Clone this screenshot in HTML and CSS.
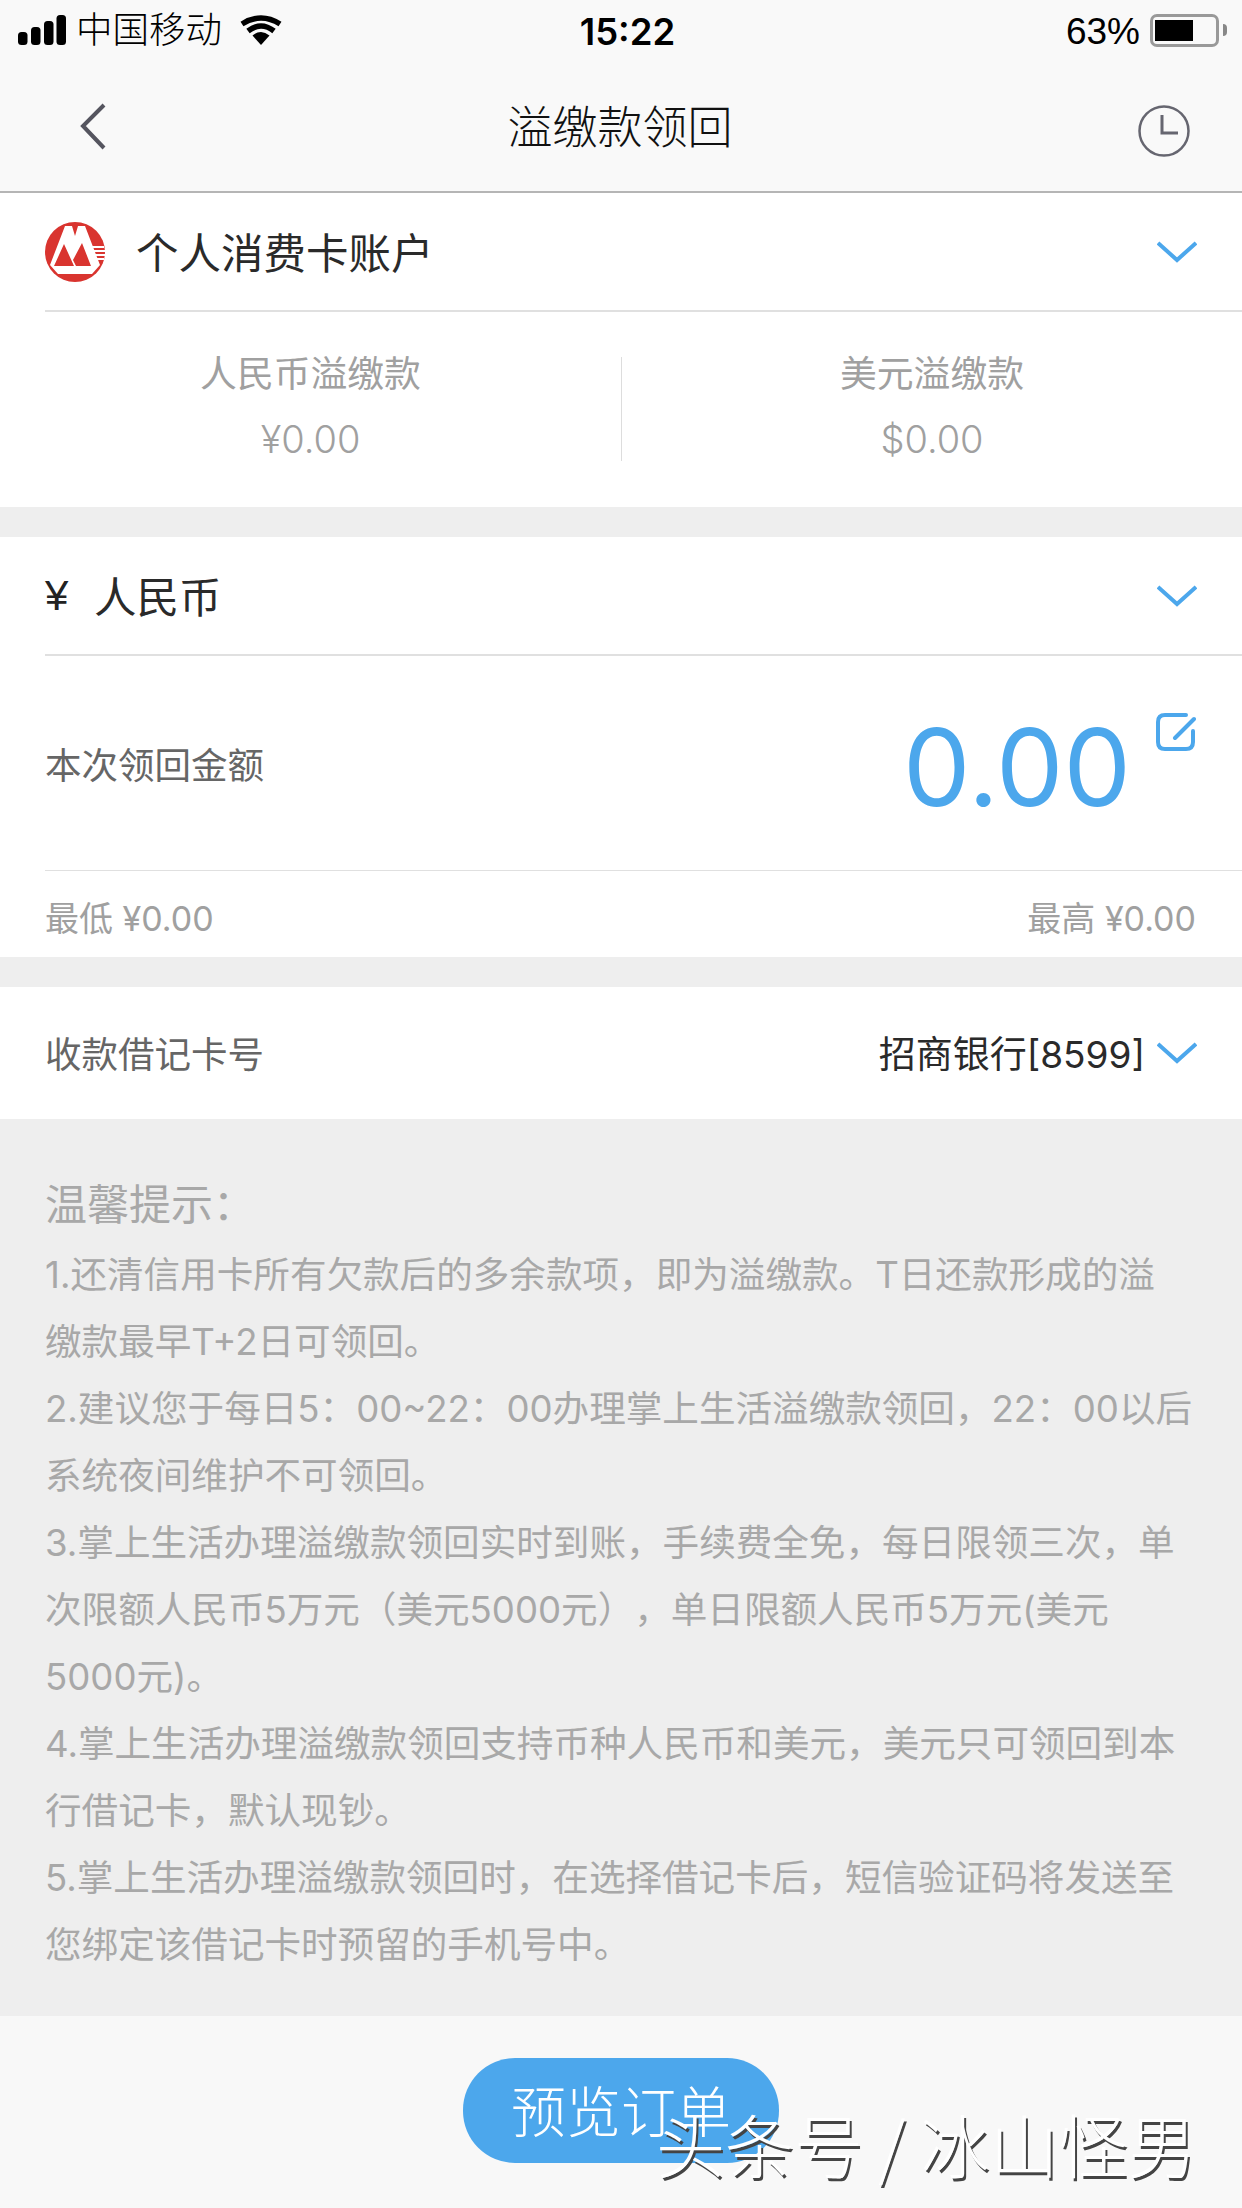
FILE: index.html
```html
<!DOCTYPE html>
<html lang="zh">
<head>
<meta charset="utf-8">
<title>溢缴款领回</title>
<link rel="stylesheet" href="styles.css">
</head>
<body>
<div class="phone">
  <header class="top">
    <div class="status">
      <div class="status-left">
        <svg class="signal" width="48" height="30" viewBox="0 0 48 30"><rect x="0" y="17" width="9.500" height="13" rx="3.500"/><rect x="13" y="12" width="9.500" height="18" rx="3.500"/><rect x="26" y="6" width="9.500" height="24" rx="3.500"/><rect x="38.500" y="0" width="9.500" height="30" rx="3.500"/></svg>
        <span class="carrier">中国移动</span>
        <svg class="wifi" width="42" height="30" viewBox="0 0 42 30"><path d="M21 30 L12.500 20.500 Q21 13.500 29.500 20.500Z"/><path d="M8 16 Q21 6 34 16" fill="none" stroke="#000" stroke-width="5.500"/><path d="M2 9 Q21 -3 40 9" fill="none" stroke="#000" stroke-width="5.500"/></svg>
      </div>
      <div class="clock">15:22</div>
      <div class="status-right">
        <span class="pct">63%</span>
        <div class="battery"><div class="battery-fill"></div></div>
        <div class="battery-tip"></div>
      </div>
    </div>
    <nav class="nav">
      <svg class="back" width="28" height="48" viewBox="0 0 28 48"><path d="M25 3 L4 24 L25 46" fill="none" stroke="#55555f" stroke-width="4"/></svg>
      <h1 class="title">溢缴款领回</h1>
      <svg class="history" width="54" height="54" viewBox="0 0 54 54"><circle cx="27" cy="27" r="24.500" fill="none" stroke="#666670" stroke-width="2.500"/><path d="M25 11 V29 H41" fill="none" stroke="#666670" stroke-width="3"/></svg>
    </nav>
  </header>

  <section class="panel panel-first">
    <div class="row row-head">
      <div class="head-left">
        <svg class="logo" width="60" height="60" viewBox="0 0 60 60">
          <circle cx="30" cy="30" r="30" fill="#d9342f"/>
          <path d="M20 4 H27 L30 14 L33 4 H40 L55 43 L47 52 H13 L5 43Z" fill="#fff"/>
          <path d="M9 44 L19 22 L29 44Z M31 44 L28 38 L37 21 L46 44Z" fill="#d9342f"/>
          <path d="M47 25 H59 M47 29 H60 M47 33 H60 M47 37 H59" stroke="#fff" stroke-width="2"/>
        </svg>
        <span class="head-text">个人消费卡账户</span>
      </div>
      <svg class="chev" width="40" height="24" viewBox="0 0 40 24"><path d="M1 3 L20 20 L39 3" fill="none" stroke="#4ca7ec" stroke-width="4"/></svg>
    </div>
    <div class="stats">
      <div class="stat stat-left"><div class="stat-label">人民币溢缴款</div><div class="stat-value">¥0.00</div></div>
      <div class="stat-sep"></div>
      <div class="stat stat-right"><div class="stat-label">美元溢缴款</div><div class="stat-value">$0.00</div></div>
    </div>
  </section>

  <section class="panel">
    <div class="row row-head">
      <div class="head-left"><span class="yen">¥</span><span class="head-text">人民币</span></div>
      <svg class="chev" width="40" height="24" viewBox="0 0 40 24"><path d="M1 3 L20 20 L39 3" fill="none" stroke="#4ca7ec" stroke-width="4"/></svg>
    </div>
    <div class="amount">
      <span class="amount-label">本次领回金额</span>
      <div class="amount-right">
        <span class="amount-value">0.00</span>
        <svg class="edit" width="40" height="38" viewBox="0 0 40 38"><path d="M30 2 H9 Q2 2 2 9 V29 Q2 36 9 36 H30 Q37 36 37 29 V18" fill="none" stroke="#4ca7ec" stroke-width="4" stroke-linecap="round"/><path d="M19 25 L38 6" fill="none" stroke="#4ca7ec" stroke-width="4" stroke-linecap="round"/></svg>
      </div>
    </div>
    <div class="limits"><span>最低 ¥0.00</span><span>最高 ¥0.00</span></div>
  </section>

  <section class="panel payee">
    <span class="payee-label">收款借记卡号</span>
    <div class="payee-right">
      <span class="payee-value">招商银行[8599]</span>
      <svg class="chev" width="40" height="24" viewBox="0 0 40 24"><path d="M1 3 L20 20 L39 3" fill="none" stroke="#4ca7ec" stroke-width="4"/></svg>
    </div>
  </section>

  <section class="tips">
    <p class="tips-title">温馨提示：</p>
    <p>1.还清信用卡所有欠款后的多余款项，即为溢缴款。T日还款形成的溢<br>缴款最早T+2日可领回。</p>
    <p>2.建议您于每日5：00~22：00办理掌上生活溢缴款领回，22：00以后系统夜间维护不可领回。</p>
    <p>3.掌上生活办理溢缴款领回实时到账，手续费全免，每日限领三次，单次限额人民币5万元（美元5000元），单日限额人民币5万元(美元<br>5000元)。</p>
    <p>4.掌上生活办理溢缴款领回支持币种人民币和美元，美元只可领回到本行借记卡，默认现钞。</p>
    <p>5.掌上生活办理溢缴款领回时，在选择借记卡后，短信验证码将发送至您绑定该借记卡时预留的手机号中。</p>
  </section>

  <footer class="foot">
    <button class="cta">预览订单</button>
  </footer>
  <div class="watermark">头条号 / 冰山怪男</div>
</div>
</body>
</html>
```
FILE: styles.css
```css
* { box-sizing: border-box; }
html, body { margin: 0; padding: 0; }
body { width: 1242px; height: 2208px; overflow: hidden; font-family: "Liberation Sans", "Noto Sans CJK SC", sans-serif; }
.phone { position: relative; width: 1242px; height: 2208px; background: #eeeeee; display: flex; flex-direction: column; }
svg { display: block; flex: none; }

.top { height: 193px; background: #f9f9f9; border-bottom: 2px solid #b5b5b5; }
.status { height: 64px; display: grid; grid-template-columns: 1fr auto 1fr; align-items: center; padding: 0 15px 4px 18px; }
.status-left { display: flex; align-items: center; }
.carrier { font-size: 36.500px; color: #000; margin: 0 0 4px 10px; line-height: 40px; font-family: "Noto Sans CJK SC", sans-serif; font-weight: 300; }
.wifi { margin-left: 18px; }
.clock { font-size: 36.500px; font-weight: 600; color: #000; margin: 4px 0 0 10px; font-family: "Inter", sans-serif; }
.status-right { display: flex; align-items: center; justify-content: flex-end; }
.pct { font-size: 37px; color: #000; margin: 4px 10px 0 0; }
.battery { width: 69px; height: 33px; border: 3px solid #999; border-radius: 7px; padding: 3px 2px; }
.battery-fill { width: 38px; height: 100%; background: #000; }
.battery-tip { width: 4px; height: 12px; background: #888; border-radius: 0 4px 4px 0; margin-left: 4px; }

.nav { position: relative; height: 127px; display: flex; align-items: center; justify-content: center; }
.back { position: absolute; left: 79px; top: 38px; }
.history { position: absolute; left: 1137px; top: 40px; }
.title { margin: 0 0 5px -2px; font-size: 45px; font-weight: 300; line-height: 100px; color: #111; font-family: "Noto Sans CJK SC", sans-serif; }

.panel { background: #fff; margin-bottom: 30px; }
.panel-first { height: 314px; }
.row { display: flex; align-items: center; justify-content: space-between; }
.row-head { height: 119px; margin-left: 45px; padding-right: 45px; border-bottom: 2px solid #e0e0e0; }
.head-left { display: flex; align-items: center; }
.logo { margin-right: 31px; }
.head-text { font-size: 42.500px; color: #2a2a2a; font-family: "Noto Sans CJK SC", sans-serif; line-height: 60px; margin-bottom: 2px; }
.yen { font-size: 42px; color: #222; width: 49px; }

.stats { display: flex; align-items: center; height: 193px; }
.stat { text-align: center; }
.stat-left { width: 621px; }
.stat-right { flex: 1; }
.stat-sep { width: 1px; height: 104px; background: #ddd; }
.stat-label { font-size: 36.800px; color: #a0a0a0; line-height: 52px; margin-top: -8px; font-family: "Noto Sans CJK SC", sans-serif; }
.stat-value { font-size: 38px; color: #a0a0a0; line-height: 52px; margin-top: 16px; font-family: "Inter", sans-serif; font-weight: 300; }

.amount { margin-left: 45px; height: 215px; padding-right: 46px; border-bottom: 1px solid #e0e0e0; display: flex; align-items: center; justify-content: space-between; }
.amount-label { font-size: 36.500px; color: #666; font-family: "Noto Sans CJK SC", sans-serif; }
.amount-right { display: flex; align-items: flex-start; padding-top: 8px; }
.amount-value { font-size: 107px; color: #4ca7ec; line-height: 108px; font-family: "Inter", sans-serif; font-weight: 400; }
.edit { margin: 0 0 0 25px; }
.limits { margin-left: 45px; padding: 5px 46px 0 0; height: 86px; display: flex; align-items: center; justify-content: space-between; font-size: 34px; color: #a0a0a0; font-family: "Inter", "Noto Sans CJK SC", sans-serif; }

.payee { height: 132px; margin-bottom: 0; padding: 0 45px; display: flex; align-items: center; justify-content: space-between; }
.payee-label { font-size: 36.500px; color: #666; font-family: "Noto Sans CJK SC", sans-serif; margin-bottom: 2px; }
.payee-right { display: flex; align-items: center; }
.payee-value { font-size: 37px; color: #2a2a2a; margin: 0 12px 2px 0; font-family: "Inter", "Noto Sans CJK SC", sans-serif; }

.tips { height: 897px; padding: 49px 48px 0 45px; background: #eeeeee; color: #a8a8a8; font-size: 36.600px; line-height: 67px; font-family: "Inter", "Noto Sans CJK SC", sans-serif; text-spacing-trim: space-all; }
.tips p { margin: 0; }
.tips .tips-title { font-size: 42px; line-height: 74px; }

.foot { flex: 1; background: #f8f8f8; display: flex; justify-content: center; padding-top: 42px; }
.cta { width: 316px; height: 105px; border: 0; border-radius: 52px; padding: 0 0 5px; background: #4ca7ec; color: #fff; font-size: 55px; font-family: "Noto Sans CJK SC", sans-serif; font-weight: 300; }

.watermark { position: absolute; left: 656px; top: 2103px; font-size: 69px; line-height: 80px; color: #fff; white-space: nowrap; font-family: "Noto Sans CJK SC", sans-serif; font-weight: 300; text-shadow: 2px 3px 0 #444; }
```
